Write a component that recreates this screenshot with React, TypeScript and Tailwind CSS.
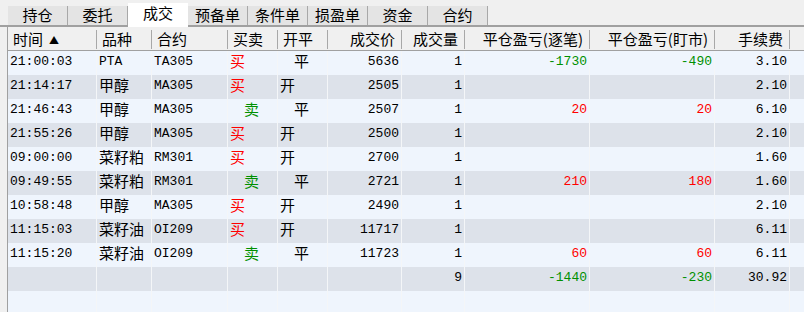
import React from "react";

type Row = {
  t: string;
  v: string;
  c: string;
  bs: "买" | "卖";
  oc: "开" | "平";
  p: string;
  q: string;
  p1?: string;
  p2?: string;
  fee: string;
};

const rows: Row[] = [
  { t: "21:00:03", v: "PTA", c: "TA305", bs: "买", oc: "平", p: "5636", q: "1", p1: "-1730", p2: "-490", fee: "3.10" },
  { t: "21:14:17", v: "甲醇", c: "MA305", bs: "买", oc: "开", p: "2505", q: "1", fee: "2.10" },
  { t: "21:46:43", v: "甲醇", c: "MA305", bs: "卖", oc: "平", p: "2507", q: "1", p1: "20", p2: "20", fee: "6.10" },
  { t: "21:55:26", v: "甲醇", c: "MA305", bs: "买", oc: "开", p: "2500", q: "1", fee: "2.10" },
  { t: "09:00:00", v: "菜籽粕", c: "RM301", bs: "买", oc: "开", p: "2700", q: "1", fee: "1.60" },
  { t: "09:49:55", v: "菜籽粕", c: "RM301", bs: "卖", oc: "平", p: "2721", q: "1", p1: "210", p2: "180", fee: "1.60" },
  { t: "10:58:48", v: "甲醇", c: "MA305", bs: "买", oc: "开", p: "2490", q: "1", fee: "2.10" },
  { t: "11:15:03", v: "菜籽油", c: "OI209", bs: "买", oc: "开", p: "11717", q: "1", fee: "6.11" },
  { t: "11:15:20", v: "菜籽油", c: "OI209", bs: "卖", oc: "平", p: "11723", q: "1", p1: "60", p2: "60", fee: "6.11" },
];

const tabs = ["持仓", "委托", "成交", "预备单", "条件单", "损盈单", "资金", "合约"];

const cjk = "font-['Noto_Sans_CJK_SC',sans-serif] text-[15px]";
const mono = "font-['Liberation_Mono',monospace] text-[13px]";

function pnlColor(v?: string) {
  if (!v) return "";
  return v.startsWith("-") ? "text-[#009000]" : "text-[#ff0000]";
}

function Cell({
  w,
  children,
  right,
  className = "",
}: {
  w: string;
  children?: React.ReactNode;
  right?: boolean;
  className?: string;
}) {
  return (
    <div
      className={`${w} shrink-0 h-full border-r border-[#f4f6f8] flex items-center pb-[3px] whitespace-nowrap overflow-hidden ${
        right ? "justify-end pr-[2px]" : "justify-start pl-[2px]"
      } ${className}`}
    >
      {children}
    </div>
  );
}

function HCell({ w, children, right }: { w: string; children?: React.ReactNode; right?: boolean }) {
  return (
    <div className={`${w} shrink-0 h-full pt-[3px] pb-[1px] flex`}>
      <div
        className={`flex-1 border-r border-[#a8a8a8] flex items-center whitespace-nowrap ${cjk} text-black ${
          right ? "justify-end pr-[6px]" : "justify-start pl-[5px]"
        }`}
      >
        {children}
      </div>
    </div>
  );
}

const W = ["w-[89px]", "w-[55px]", "w-[76px]", "w-[50px]", "w-[50px]", "w-[74px]", "w-[63px]", "w-[125px]", "w-[125px]", "w-[75px]"];

export default function App() {
  return (
    <div className="w-[804px] h-[312px] bg-[#f0f0f0] overflow-hidden text-black">
      {/* tabs */}
      <div className="h-[27px] flex items-end pl-[8px] border-b-2 border-[#a0a0a0]">
        {tabs.map((t) => {
          const active = t === "成交";
          return (
            <div
              key={t}
              className={`w-[60px] flex items-center justify-center ${cjk} ${
                active
                  ? "bg-white h-[24px] -mb-[2px] pb-[3px]"
                  : "bg-[#e4e4e4] h-[19px] border-r border-[#a8a8a8]"
              }`}
            >
              {t}
            </div>
          );
        })}
      </div>
      {/* table */}
      <div className="flex h-[285px]">
        <div className="w-[7px] shrink-0" />
        <div className="flex-1 border-l border-[#a0a0a0] flex flex-col">
          <div className="h-[24px] flex border-b border-[#a0a0a0] bg-[#f0f0f0]">
            <HCell w={W[0]}>
              时间<span className="ml-[6px] text-[10px]">▲</span>
            </HCell>
            <HCell w={W[1]}>品种</HCell>
            <HCell w={W[2]}>合约</HCell>
            <HCell w={W[3]}>买卖</HCell>
            <HCell w={W[4]}>开平</HCell>
            <HCell w={W[5]} right>
              成交价
            </HCell>
            <HCell w={W[6]} right>
              成交量
            </HCell>
            <HCell w={W[7]} right>
              平仓盈亏(逐笔)
            </HCell>
            <HCell w={W[8]} right>
              平仓盈亏(盯市)
            </HCell>
            <HCell w={W[9]} right>
              手续费
            </HCell>
            <div className="flex-1" />
          </div>
          {rows.map((r, i) => (
            <div key={i} className={`h-[24px] flex ${i % 2 === 0 ? "bg-[#eff5fd]" : "bg-[#dde2ea]"}`}>
              <Cell w={W[0]} className={mono}>
                {r.t}
              </Cell>
              <Cell w={W[1]} className={/[A-Z]/.test(r.v) ? mono : cjk}>
                {r.v}
              </Cell>
              <Cell w={W[2]} className={mono}>
                {r.c}
              </Cell>
              <Cell
                w={W[3]}
                className={`${cjk} ${r.bs === "买" ? "text-[#ff0000]" : "text-[#009000] pl-[16px]"}`}
              >
                {r.bs}
              </Cell>
              <Cell w={W[4]} className={`${cjk} ${r.oc === "平" ? "pl-[16px]" : ""}`}>
                {r.oc}
              </Cell>
              <Cell w={W[5]} right className={mono}>
                {r.p}
              </Cell>
              <Cell w={W[6]} right className={mono}>
                {r.q}
              </Cell>
              <Cell w={W[7]} right className={`${mono} ${pnlColor(r.p1)}`}>
                {r.p1}
              </Cell>
              <Cell w={W[8]} right className={`${mono} ${pnlColor(r.p2)}`}>
                {r.p2}
              </Cell>
              <Cell w={W[9]} right className={mono}>
                {r.fee}
              </Cell>
              <div className="flex-1" />
            </div>
          ))}
          <div className="h-[24px] flex bg-[#dde2ea]">
            <Cell w={W[0]} />
            <Cell w={W[1]} />
            <Cell w={W[2]} />
            <Cell w={W[3]} />
            <Cell w={W[4]} />
            <Cell w={W[5]} />
            <Cell w={W[6]} right className={mono}>
              9
            </Cell>
            <Cell w={W[7]} right className={`${mono} text-[#009000]`}>
              -1440
            </Cell>
            <Cell w={W[8]} right className={`${mono} text-[#009000]`}>
              -230
            </Cell>
            <Cell w={W[9]} right className={mono}>
              30.92
            </Cell>
            <div className="flex-1" />
          </div>
          <div className="flex-1 flex bg-[#eff5fd]">
            {W.map((w, i) => (
              <Cell key={i} w={w} />
            ))}
            <div className="flex-1" />
          </div>
        </div>
      </div>
    </div>
  );
}
